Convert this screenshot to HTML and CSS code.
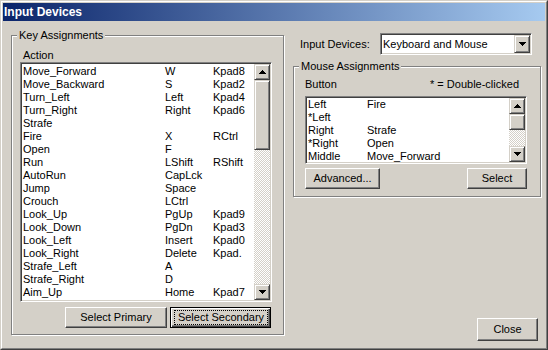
FILE: index.html
```html
<!DOCTYPE html>
<html lang="en">
<head>
    <meta charset="UTF-8">
    <title>Input Devices</title>
    <link rel="stylesheet" href="styles.css">
</head>
<body>
    <div class="window">
        <div class="frame">
            <div class="titlebar">Input Devices</div>

            <div class="client">
                <!-- Key Assignments -->
                <div class="group key-group">
                    <div class="group-title">Key Assignments</div>
                    <div class="col-label">Action</div>
                    <div class="listbox key-list">
                        <div class="list-rows">
                            <div class="row"><span>Move_Forward</span><span>W</span><span>Kpad8</span></div>
                            <div class="row"><span>Move_Backward</span><span>S</span><span>Kpad2</span></div>
                            <div class="row"><span>Turn_Left</span><span>Left</span><span>Kpad4</span></div>
                            <div class="row"><span>Turn_Right</span><span>Right</span><span>Kpad6</span></div>
                            <div class="row"><span>Strafe</span><span></span><span></span></div>
                            <div class="row"><span>Fire</span><span>X</span><span>RCtrl</span></div>
                            <div class="row"><span>Open</span><span>F</span><span></span></div>
                            <div class="row"><span>Run</span><span>LShift</span><span>RShift</span></div>
                            <div class="row"><span>AutoRun</span><span>CapLck</span><span></span></div>
                            <div class="row"><span>Jump</span><span>Space</span><span></span></div>
                            <div class="row"><span>Crouch</span><span>LCtrl</span><span></span></div>
                            <div class="row"><span>Look_Up</span><span>PgUp</span><span>Kpad9</span></div>
                            <div class="row"><span>Look_Down</span><span>PgDn</span><span>Kpad3</span></div>
                            <div class="row"><span>Look_Left</span><span>Insert</span><span>Kpad0</span></div>
                            <div class="row"><span>Look_Right</span><span>Delete</span><span>Kpad.</span></div>
                            <div class="row"><span>Strafe_Left</span><span>A</span><span></span></div>
                            <div class="row"><span>Strafe_Right</span><span>D</span><span></span></div>
                            <div class="row"><span>Aim_Up</span><span>Home</span><span>Kpad7</span></div>
                        </div>
                        <div class="scrollbar">
                            <div class="sb-btn">
                                <svg width="7" height="4" viewBox="0 0 7 4" shape-rendering="crispEdges"><path d="M3 0h1v1h1v1h1v1h1v1H0V3h1V2h1V1h1z"/></svg>
                            </div>
                            <div class="sb-thumb key-thumb"></div>
                            <div class="sb-track"></div>
                            <div class="sb-btn">
                                <svg width="7" height="4" viewBox="0 0 7 4" shape-rendering="crispEdges"><path d="M0 0h7v1H6v1H5v1H4v1H3V3H2V2H1V1H0z"/></svg>
                            </div>
                        </div>
                    </div>
                    <div class="btn-row key-buttons">
                        <button class="btn btn-primary">Select Primary</button>
                        <button class="btn btn-default btn-secondary"><span class="focus">Select Secondary</span></button>
                    </div>
                </div>

                <div class="right-col">
                    <div class="device-row">
                        <span class="device-label">Input Devices:</span>
                        <div class="combo">
                            <span class="combo-text">Keyboard and Mouse</span>
                            <div class="sb-btn combo-btn">
                                <svg width="7" height="4" viewBox="0 0 7 4" shape-rendering="crispEdges"><path d="M0 0h7v1H6v1H5v1H4v1H3V3H2V2H1V1H0z"/></svg>
                            </div>
                        </div>
                    </div>

                    <!-- Mouse Assignments -->
                    <div class="group mouse-group">
                        <div class="group-title">Mouse Assignments</div>
                        <div class="mouse-header">
                            <span>Button</span>
                            <span>* = Double-clicked</span>
                        </div>
                        <div class="listbox mouse-list">
                            <div class="list-rows">
                                <div class="row"><span>Left</span><span>Fire</span></div>
                                <div class="row"><span>*Left</span><span></span></div>
                                <div class="row"><span>Right</span><span>Strafe</span></div>
                                <div class="row"><span>*Right</span><span>Open</span></div>
                                <div class="row"><span>Middle</span><span>Move_Forward</span></div>
                            </div>
                            <div class="scrollbar">
                                <div class="sb-btn">
                                    <svg width="7" height="4" viewBox="0 0 7 4" shape-rendering="crispEdges"><path d="M3 0h1v1h1v1h1v1h1v1H0V3h1V2h1V1h1z"/></svg>
                                </div>
                                <div class="sb-thumb mouse-thumb"></div>
                                <div class="sb-track"></div>
                                <div class="sb-btn">
                                    <svg width="7" height="4" viewBox="0 0 7 4" shape-rendering="crispEdges"><path d="M0 0h7v1H6v1H5v1H4v1H3V3H2V2H1V1H0z"/></svg>
                                </div>
                            </div>
                        </div>
                        <div class="btn-row mouse-buttons">
                            <button class="btn btn-advanced">Advanced...</button>
                            <button class="btn btn-select">Select</button>
                        </div>
                    </div>

                    <button class="btn btn-close">Close</button>
                </div>
            </div>
        </div>
    </div>
</body>
</html>
```

FILE: styles.css
```css
/* General Reset */
* {
    margin: 0;
    padding: 0;
    box-sizing: border-box;
}

body {
    font-family: "Liberation Sans", Arial, sans-serif;
    font-size: 11px;
    line-height: 13px;
    color: #000000;
    background: #D4D0C8;
}

/* Window frame */
.window {
    width: 548px;
    height: 350px;
    background: #D4D0C8;
    border: 1px solid;
    border-color: #D4D0C8 #404040 #404040 #D4D0C8;
}

.frame {
    height: 100%;
    border: 1px solid;
    border-color: #ffffff #808080 #808080 #ffffff;
    padding: 1px;
    display: flex;
    flex-direction: column;
}

.titlebar {
    height: 18px;
    line-height: 18px;
    padding-left: 1px;
    background: linear-gradient(to right, #0A246A, #A6CAF0);
    color: #ffffff;
    font-weight: bold;
    font-size: 12px;
}

.client {
    flex: 1;
    display: flex;
    align-items: flex-start;
    padding: 12px 0 6px 8px;
}

/* Group boxes */
.group {
    border: 1px solid #808080;
    box-shadow: inset 1px 1px 0 #ffffff, 1px 1px 0 #ffffff;
}

.group-title {
    width: fit-content;
    margin-top: -7px;
    padding: 0 2px;
    background: #D4D0C8;
}

.key-group {
    width: 273px;
    height: 300px;
    margin-top: 2px;
    padding: 0 11px 0 8px;
}

.key-group .group-title {
    margin-left: -3px;
}

.col-label {
    margin-top: 7px;
    padding-left: 3px;
}

/* List boxes */
.listbox {
    display: flex;
    background: #ffffff;
    border: 1px solid;
    border-color: #808080 #ffffff #ffffff #808080;
    box-shadow: inset 1px 1px 0 #404040, inset -1px -1px 0 #D4D0C8;
    padding: 1px;
}

.list-rows {
    flex: 1;
    overflow: hidden;
    padding-left: 1px;
}

.row {
    display: grid;
    height: 13px;
    white-space: nowrap;
}

.key-list {
    width: 252px;
    height: 240px;
}

.key-list .list-rows {
    padding-top: 1px;
}

.key-list .row {
    grid-template-columns: 142px 48px 1fr;
}

.mouse-list {
    width: 222px;
    height: 68px;
    margin-top: 5px;
}

.mouse-list .row {
    grid-template-columns: 59px 1fr;
}

/* Scrollbars */
.scrollbar {
    width: 16px;
    display: flex;
    flex-direction: column;
}

.sb-btn,
.sb-thumb {
    background: #D4D0C8;
    border: 1px solid;
    border-color: #D4D0C8 #404040 #404040 #D4D0C8;
    box-shadow: inset 1px 1px 0 #ffffff, inset -1px -1px 0 #808080;
}

.sb-btn {
    width: 16px;
    height: 16px;
    display: flex;
    align-items: center;
    justify-content: center;
}

.key-thumb {
    height: 70px;
}

.mouse-thumb {
    height: 16px;
}

.sb-track {
    flex: 1;
    background-color: #ffffff;
    background-image: repeating-conic-gradient(#D4D0C8 0 25%, #ffffff 0 50%);
    background-size: 2px 2px;
}

/* Buttons */
.btn {
    font-family: "Liberation Sans", Arial, sans-serif;
    font-size: 11px;
    line-height: 13px;
    color: #000000;
    height: 21px;
    background: #D4D0C8;
    border: 1px solid;
    border-color: #ffffff #404040 #404040 #ffffff;
    box-shadow: inset -1px -1px 0 #808080, inset 1px 1px 0 #D4D0C8;
}

.btn-default {
    border: 1px solid #000000;
    box-shadow: inset 1px 1px 0 #ffffff, inset -1px -1px 0 #404040, inset -2px -2px 0 #808080;
}

.focus {
    display: block;
    margin: 0 2px 0 3px;
    border: 1px dotted #000000;
    line-height: 13px;
}

.btn-row {
    display: flex;
}

.key-buttons {
    justify-content: flex-end;
    gap: 3px;
    margin-top: 5px;
    padding-right: 1px;
}

.btn-primary {
    width: 102px;
}

.btn-secondary {
    width: 101px;
}

/* Right column */
.right-col {
    width: 248px;
    height: 308px;
    margin-left: 9px;
    display: flex;
    flex-direction: column;
}

.device-row {
    display: flex;
    align-items: center;
    height: 22px;
}

.device-label {
    width: 80px;
    margin-left: 7px;
}

.combo {
    width: 152px;
    height: 22px;
    display: flex;
    align-items: center;
    background: #ffffff;
    border: 1px solid;
    border-color: #808080 #ffffff #ffffff #808080;
    box-shadow: inset 1px 1px 0 #404040, inset -1px -1px 0 #D4D0C8;
    padding: 1px;
}

.combo-text {
    flex: 1;
    padding-left: 1px;
}

.combo-btn {
    height: 18px;
}

.mouse-group {
    width: 248px;
    height: 131px;
    margin-top: 11px;
    padding: 0 13px 0 11px;
}

.mouse-group .group-title {
    margin-left: -6px;
}

.mouse-header {
    display: flex;
    justify-content: space-between;
    margin-top: 5px;
    padding-right: 8px;
}

.mouse-buttons {
    justify-content: space-between;
    width: 222px;
    margin-top: 4px;
}

.btn-advanced {
    width: 75px;
}

.btn-select {
    width: 60px;
}

.btn-close {
    align-self: flex-end;
    margin-top: auto;
    margin-right: 3px;
    width: 61px;
    height: 23px;
}
```
